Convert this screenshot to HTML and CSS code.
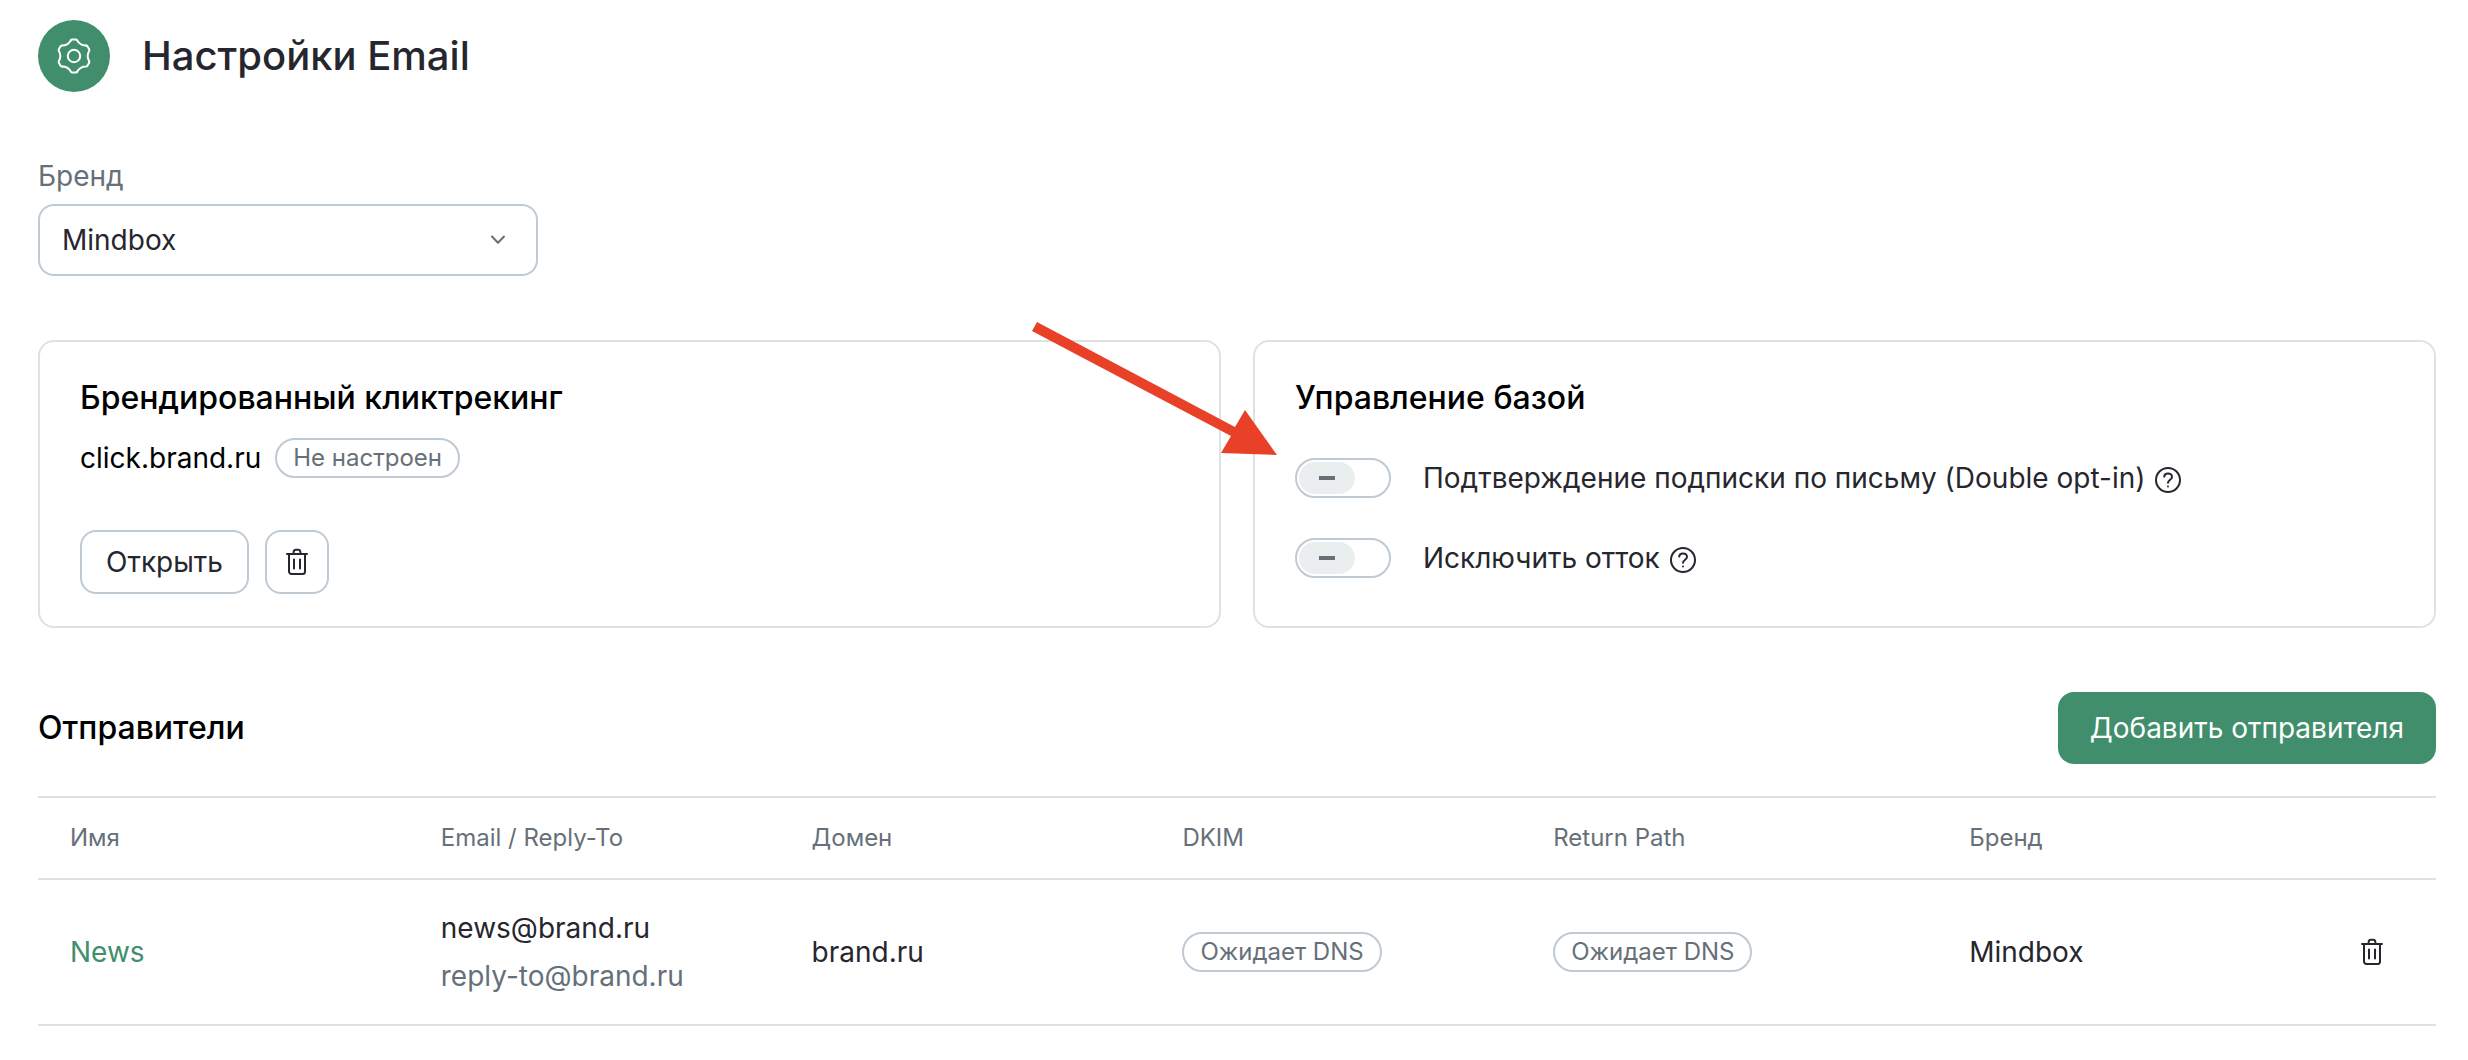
FILE: index.html
```
<!DOCTYPE html>
<html lang="ru">

<head>
  <meta charset="UTF-8">
  <meta name="viewport" content="width=device-width, initial-scale=1.0">
  <title>Настройки Email</title>
  <link rel="stylesheet" href="styles.css">
</head>

<body>
  <!-- shared icons -->
  <svg class="sprite" aria-hidden="true">
    <symbol id="icon-trash" viewBox="-14 -14 28 28">
      <path d="M-10-8H10M-8-8V9.5A2.5 2.5 0 0 0-5.5 12H5.5A2.5 2.5 0 0 0 8 9.5V-8M-3.5-8.5C-3.5-13-1.5-12.2 0-12.2S3.5-13 3.5-8.5M-3-2.5V6.5M3-2.5V6.5" />
    </symbol>
    <symbol id="icon-help" viewBox="-13 -13 26 26">
      <circle r="12" />
      <path d="M-3.8-3.4C-3.6-5.6-2-6.6 0-6.6C2.3-6.6 4-5.2 4-3.1C4-.4 0-.2 0 2.8" />
      <path d="M0 6.4V6.6" />
    </symbol>
  </svg>

  <header class="header">
    <span class="header-icon">
      <svg viewBox="-18 -18 36 36" width="36" height="36">
        <path id="tooth" d="M-3.2-15.6Q-2.6-16.5-1.8-16.5H1.8Q2.6-16.5 3.2-15.6C5.2-12.2 8-10.6 11.9-10.6" />
        <use href="#tooth" transform="rotate(60)" />
        <use href="#tooth" transform="rotate(120)" />
        <use href="#tooth" transform="rotate(180)" />
        <use href="#tooth" transform="rotate(240)" />
        <use href="#tooth" transform="rotate(300)" />
        <circle r="6.2" />
      </svg>
    </span>
    <h1>Настройки Email</h1>
  </header>

  <main>
    <div class="field">
      <label for="brand">Бренд</label>
      <div class="select">
        <select id="brand">
          <option>Mindbox</option>
        </select>
        <svg class="chevron" viewBox="0 0 16 12" width="16" height="12">
          <path d="M2 2.5L8 8.8L14 2.5" />
        </svg>
      </div>
    </div>

    <div class="cards">
      <section class="card">
        <h2>Брендированный кликтрекинг</h2>
        <div class="domain">
          <span>click.brand.ru</span>
          <span class="badge">Не настроен</span>
        </div>
        <div class="actions">
          <button class="button">Открыть</button>
          <button class="button button-icon" aria-label="Удалить">
            <svg class="icon" width="28" height="28"><use href="#icon-trash" /></svg>
          </button>
        </div>
      </section>

      <section class="card">
        <h2>Управление базой</h2>
        <div class="options">
          <div class="option">
            <input class="toggle" type="checkbox" id="double-opt-in">
            <label for="double-opt-in">Подтверждение подписки по письму (Double opt-in)</label>
            <svg class="icon help" width="26" height="26"><use href="#icon-help" /></svg>
          </div>
          <div class="option">
            <input class="toggle" type="checkbox" id="exclude-churn">
            <label for="exclude-churn">Исключить отток</label>
            <svg class="icon help" width="26" height="26"><use href="#icon-help" /></svg>
          </div>
        </div>
        <svg class="arrow" viewBox="0 0 246 136" width="246" height="136">
          <path d="M6 2L204 107L214 90L246 135L190 133L200 116L1 11Z" />
        </svg>
      </section>
    </div>

    <section>
      <div class="section-header">
        <h2>Отправители</h2>
        <button class="button button-primary">Добавить отправителя</button>
      </div>

      <table class="senders">
        <thead>
          <tr>
            <th>Имя</th>
            <th>Email / Reply-To</th>
            <th>Домен</th>
            <th>DKIM</th>
            <th class="col-path">Return Path</th>
            <th>Бренд</th>
            <th class="col-action"></th>
          </tr>
        </thead>
        <tbody>
          <tr>
            <td><a href="#">News</a></td>
            <td>
              <div>news@brand.ru</div>
              <div class="muted">reply-to@brand.ru</div>
            </td>
            <td>brand.ru</td>
            <td><span class="badge">Ожидает DNS</span></td>
            <td><span class="badge">Ожидает DNS</span></td>
            <td>Mindbox</td>
            <td class="col-action">
              <button class="delete" aria-label="Удалить">
                <svg class="icon" width="28" height="28"><use href="#icon-trash" /></svg>
              </button>
            </td>
          </tr>
        </tbody>
      </table>
    </section>
  </main>
</body>

</html>
```
FILE: styles.css
```
* {
  box-sizing: border-box;
}

body {
  margin: 0;
  padding: 20px 32px 32px 38px;
  font-family: Inter, "Liberation Sans", sans-serif;
  font-size: 28px;
  line-height: 40px;
  color: #26262e;
  background-color: #fff;
}

h1,
h2 {
  margin: 0;
  font-weight: 500;
}

h1 {
  font-size: 40px;
  line-height: 48px;
}

h2 {
  font-size: 32px;
  line-height: 48px;
  color: #000;
}

svg {
  display: block;
  fill: none;
  stroke-width: 2;
  stroke-linecap: round;
  stroke-linejoin: round;
}

.sprite {
  display: none;
}

.icon {
  stroke: #26262e;
}

/* Header */

.header {
  display: flex;
  align-items: center;
  gap: 32px;
  margin-bottom: 64px;
}

.header-icon {
  display: flex;
  align-items: center;
  justify-content: center;
  width: 72px;
  height: 72px;
  border-radius: 50%;
  background-color: #418e6d;
  stroke: #fff;
}

/* Brand select */

.field {
  display: flex;
  flex-direction: column;
  gap: 8px;
  width: 500px;
  margin-bottom: 64px;
}

.field label {
  color: #667079;
}

.select {
  display: grid;
  align-items: center;
}

.select select,
.chevron {
  grid-area: 1 / 1;
}

.select select {
  width: 100%;
  height: 72px;
  padding: 0 64px 0 22px;
  border: 2px solid #bfcad3;
  border-radius: 16px;
  appearance: none;
  font: inherit;
  color: inherit;
  background-color: #fff;
}

.chevron {
  justify-self: end;
  margin-right: 32px;
  stroke: #667079;
  pointer-events: none;
}

/* Cards */

.cards {
  display: grid;
  grid-template-columns: 1fr 1fr;
  gap: 32px;
  margin-bottom: 64px;
}

.card {
  position: relative;
  padding: 32px 40px;
  border: 2px solid #dce2e8;
  border-radius: 16px;
}

.domain {
  display: flex;
  align-items: center;
  gap: 14px;
  margin: 16px 0 52px;
  color: #000;
}

.badge {
  display: inline-block;
  padding: 0 16px;
  border: 2px solid #bfcad3;
  border-radius: 20px;
  font-size: 24px;
  line-height: 36px;
  color: #667079;
  vertical-align: middle;
}

.actions {
  display: flex;
  gap: 16px;
}

.button {
  height: 64px;
  padding: 0 24px;
  border: 2px solid #bfcad3;
  border-radius: 16px;
  font: inherit;
  color: inherit;
  background-color: #fff;
  cursor: pointer;
}

.button-icon {
  padding: 0 16px;
}

.button-primary {
  height: 72px;
  padding: 0 32px;
  border: none;
  color: #fff;
  background-color: #418e6d;
}

.options {
  display: flex;
  flex-direction: column;
  gap: 40px;
  margin-top: 36px;
}

.option {
  display: flex;
  align-items: center;
}

.toggle {
  display: flex;
  width: 96px;
  height: 40px;
  margin: 0 32px 0 0;
  padding: 2px;
  border: 2px solid #bfcad3;
  border-radius: 20px;
  appearance: none;
  cursor: pointer;
}

.toggle::before {
  content: "";
  width: 56px;
  height: 32px;
  border-radius: 16px;
  background: linear-gradient(#667079, #667079) center / 16px 4px no-repeat #ebeeef;
}

.toggle:checked::before {
  margin-left: auto;
}

.help {
  margin: 4px 0 0 10px;
}

.arrow {
  position: absolute;
  top: -22px;
  left: -224px;
  fill: #e94127;
  pointer-events: none;
}

/* Senders */

.section-header {
  display: flex;
  align-items: center;
  justify-content: space-between;
  margin-bottom: 32px;
}

.senders {
  width: 100%;
  border-collapse: separate;
  border-spacing: 0;
  border-top: 2px solid #dce2e8;
  table-layout: fixed;
}

.senders th,
.senders td {
  padding: 24px 32px;
  border-bottom: 2px solid #dce2e8;
  text-align: left;
}

.senders th {
  padding: 20px 32px;
  font-size: 24px;
  font-weight: 400;
  color: #667079;
}

.senders td {
  line-height: 48px;
}

.senders .badge {
  display: block;
  width: fit-content;
  line-height: 36px;
}

.senders .col-path {
  width: 416px;
}

.senders .col-action {
  width: 128px;
}

.senders a {
  color: #418e6d;
  text-decoration: none;
}

.muted {
  color: #667079;
}

.delete {
  display: block;
  margin: 0 auto;
  padding: 0;
  border: none;
  background: none;
  cursor: pointer;
}
```
